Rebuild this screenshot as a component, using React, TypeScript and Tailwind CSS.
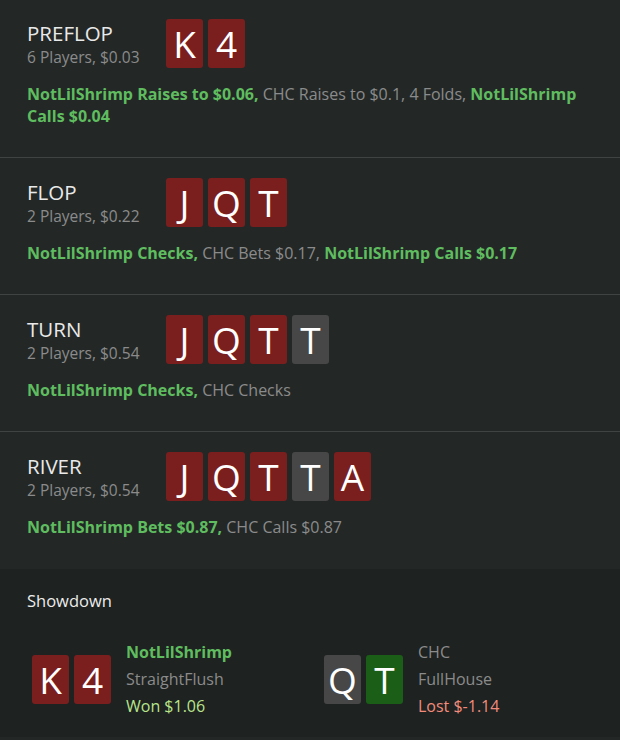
type Card = { v: string; c: "red" | "grey" | "green" };

interface Street {
  name: string;
  sub: string;
  cards: Card[];
  actions: { text: string; hero: boolean }[];
}

const r = (v: string): Card => ({ v, c: "red" });
const g = (v: string): Card => ({ v, c: "grey" });

const streets: Street[] = [
  {
    name: "PREFLOP",
    sub: "6 Players, $0.03",
    cards: [r("K"), r("4")],
    actions: [
      { text: "NotLilShrimp Raises to $0.06,", hero: true },
      { text: "CHC Raises to $0.1, 4 Folds,", hero: false },
      { text: "NotLilShrimp Calls $0.04", hero: true },
    ],
  },
  {
    name: "FLOP",
    sub: "2 Players, $0.22",
    cards: [r("J"), r("Q"), r("T")],
    actions: [
      { text: "NotLilShrimp Checks,", hero: true },
      { text: "CHC Bets $0.17,", hero: false },
      { text: "NotLilShrimp Calls $0.17", hero: true },
    ],
  },
  {
    name: "TURN",
    sub: "2 Players, $0.54",
    cards: [r("J"), r("Q"), r("T"), g("T")],
    actions: [
      { text: "NotLilShrimp Checks,", hero: true },
      { text: "CHC Checks", hero: false },
    ],
  },
  {
    name: "RIVER",
    sub: "2 Players, $0.54",
    cards: [r("J"), r("Q"), r("T"), g("T"), r("A")],
    actions: [
      { text: "NotLilShrimp Bets $0.87,", hero: true },
      { text: "CHC Calls $0.87", hero: false },
    ],
  },
];

function PlayingCard({ card }: { card: Card }) {
  const bg =
    card.c === "red" ? "bg-[#7b1e1e]" : card.c === "grey" ? "bg-[#474747]" : "bg-[#1b5e17]";
  return (
    <div
      className={`${bg} w-[37px] h-[49px] rounded-[3px] flex items-center justify-center text-[37px] leading-none text-white`}
    >
      {card.v}
    </div>
  );
}

export default function App() {
  return (
    <div
      className="min-h-screen bg-[#232827] text-[#e9e9e9]"
      style={{ fontFamily: '"Open Sans", "Noto Sans", sans-serif' }}
    >
      {streets.map((s, i) => (
        <section
          key={s.name}
          className={`pl-[27px] pr-[24px] pb-[30px] ${i < streets.length - 1 ? "border-b border-[#3f4443]" : "pb-[31px]"} ${i === 0 ? "pt-[19px]" : "pt-[20px]"}`}
        >
          <div className="flex items-start h-[49px]">
            <div className="w-[139px] pt-[1px]">
              <div className="text-[20.5px] leading-[27px]">{s.name}</div>
              <div className="text-[15.5px] leading-[21px] text-[#8b8b8b]">{s.sub}</div>
            </div>
            <div className="flex gap-[5px]">
              {s.cards.map((c, j) => (
                <PlayingCard key={j} card={c} />
              ))}
            </div>
          </div>
          <p className="mt-[15px] text-[16px] leading-[22px] text-[#8b8b8b]">
            {s.actions.map((a, j) => (
              <span key={j} className={a.hero ? "font-bold text-[#5fbd5f]" : ""}>
                {a.text}
                {j < s.actions.length - 1 ? " " : ""}
              </span>
            ))}
          </p>
        </section>
      ))}

      {/* Showdown */}
      <section className="bg-[#1e2220] h-[168px] pt-[22px]">
        <h2 className="pl-[27px] text-[16.5px] leading-[20px] text-[#ececec]">Showdown</h2>
        <div className="mt-[28px] pl-[32px] grid grid-cols-[292px_1fr]">
          <div className="flex items-center">
            <div className="flex gap-[5px]">
              <PlayingCard card={r("K")} />
              <PlayingCard card={r("4")} />
            </div>
            <div className="ml-[15px] text-[16px] leading-[27px]">
              <div className="font-bold text-[#5fbd5f]">NotLilShrimp</div>
              <div className="text-[#8b8b8b]">StraightFlush</div>
              <div className="text-[#b8e58c]">Won $1.06</div>
            </div>
          </div>
          <div className="flex items-center">
            <div className="flex gap-[5px]">
              <PlayingCard card={g("Q")} />
              <PlayingCard card={{ v: "T", c: "green" }} />
            </div>
            <div className="ml-[15px] text-[16px] leading-[27px]">
              <div className="text-[#8b8b8b]">CHC</div>
              <div className="text-[#8b8b8b]">FullHouse</div>
              <div className="text-[#f28b7b]">Lost $-1.14</div>
            </div>
          </div>
        </div>
      </section>
    </div>
  );
}
